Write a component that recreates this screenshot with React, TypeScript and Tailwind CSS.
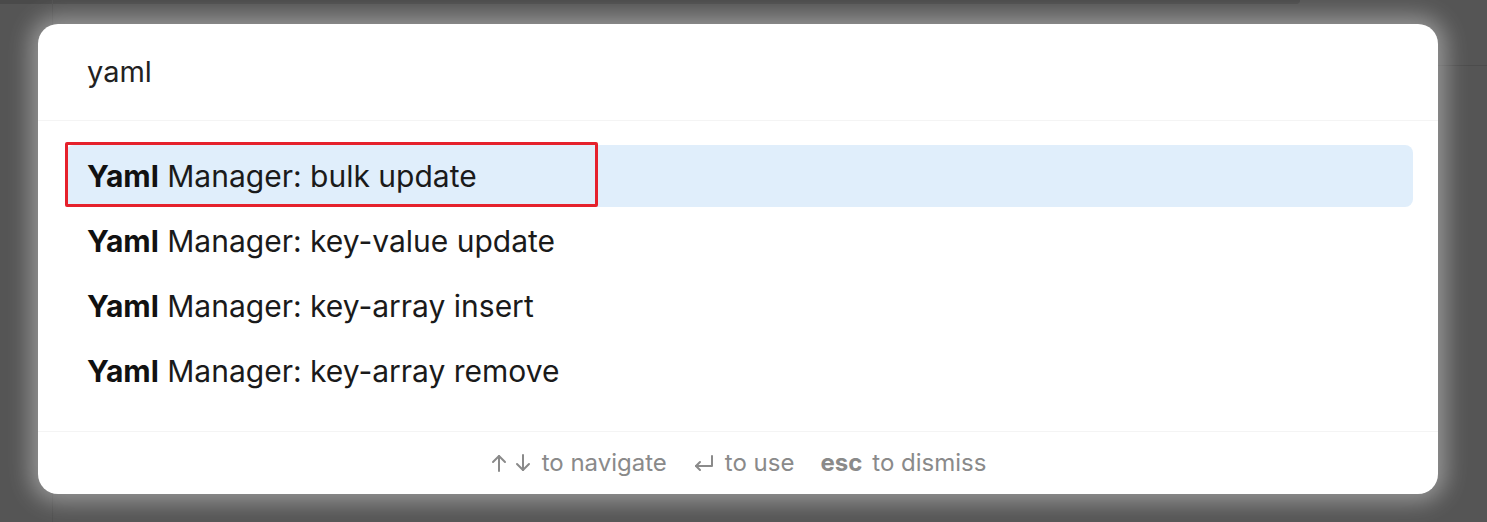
import React from "react";

const commands = [
  "bulk update",
  "key-value update",
  "key-array insert",
  "key-array remove",
];

const ArrowUpIcon = () => (
  <svg width="18" height="20" viewBox="0 0 18 20" fill="none" stroke="currentColor" strokeWidth="2" strokeLinecap="round" strokeLinejoin="round">
    <path d="M9 18V3" />
    <path d="M3 9l6-6 6 6" />
  </svg>
);

const ArrowDownIcon = () => (
  <svg width="18" height="20" viewBox="0 0 18 20" fill="none" stroke="currentColor" strokeWidth="2" strokeLinecap="round" strokeLinejoin="round">
    <path d="M9 2v15" />
    <path d="M3 11l6 6 6-6" />
  </svg>
);

const ReturnIcon = () => (
  <svg width="22" height="20" viewBox="0 0 22 20" fill="none" stroke="currentColor" strokeWidth="2" strokeLinecap="round" strokeLinejoin="round">
    <path d="M19 3v10H3" />
    <path d="M7 9l-4 4 4 4" />
  </svg>
);

export default function App() {
  return (
    <div
      className="relative w-[1487px] h-[522px] overflow-hidden bg-[#555555]"
      style={{ fontFamily: "Inter, 'Noto Sans', sans-serif" }}
    >
      {/* faint app chrome behind the overlay */}
      <div className="absolute left-0 top-0 h-[4px] w-[1300px] rounded-br-md bg-[#4a4a4a]" />
      <div className="absolute left-[52px] top-0 h-full w-px bg-[#4f4f4f]" />
      <div className="absolute right-0 top-[65px] h-px w-[60px] bg-[#4c4c4c]" />

      <div className="relative ml-[38px] mt-[24px] flex h-[470px] w-[1400px] flex-col rounded-[20px] bg-white shadow-[0_0_22px_8px_rgba(255,255,255,0.38)]">
        <div className="flex h-[97px] items-center border-b border-[#f4f4f4] px-[49px] text-[29px] text-[#222222]">
          yaml
        </div>

        <div className="flex flex-1 flex-col gap-[3px] pl-[28px] pr-[25px] pt-[24px]">
          {commands.map((c, i) => (
            <div
              key={c}
              className={
                i === 0
                  ? "relative flex h-[62px] items-center rounded-[8px] bg-[#e0eefb] pl-[21px] text-[30px] text-[#1a1a1a]"
                  : "relative flex h-[62px] items-center rounded-[8px] pl-[21px] text-[30px] text-[#1a1a1a]"
              }
            >
              <span className="whitespace-pre">
                <span className="font-bold text-[#111111]">Yaml</span> Manager: {c}
              </span>
              {i === 0 && (
                <div className="absolute left-[-1px] top-[-3px] h-[65px] w-[533px] rounded-[2px] border-[3px] border-[#e5212c]" />
              )}
            </div>
          ))}
        </div>

        <div className="flex h-[63px] items-center justify-center border-t border-[#f4f4f4] text-[24px] text-[#8a8a8a]">
          <span className="flex items-center gap-[6px]">
            <ArrowUpIcon />
            <ArrowDownIcon />
          </span>
          <span className="ml-[10px]">to navigate</span>
          <span className="ml-[26px] flex items-center">
            <ReturnIcon />
          </span>
          <span className="ml-[10px]">to use</span>
          <span className="ml-[26px] font-bold">esc</span>
          <span className="ml-[10px]">to dismiss</span>
        </div>
      </div>
    </div>
  );
}
